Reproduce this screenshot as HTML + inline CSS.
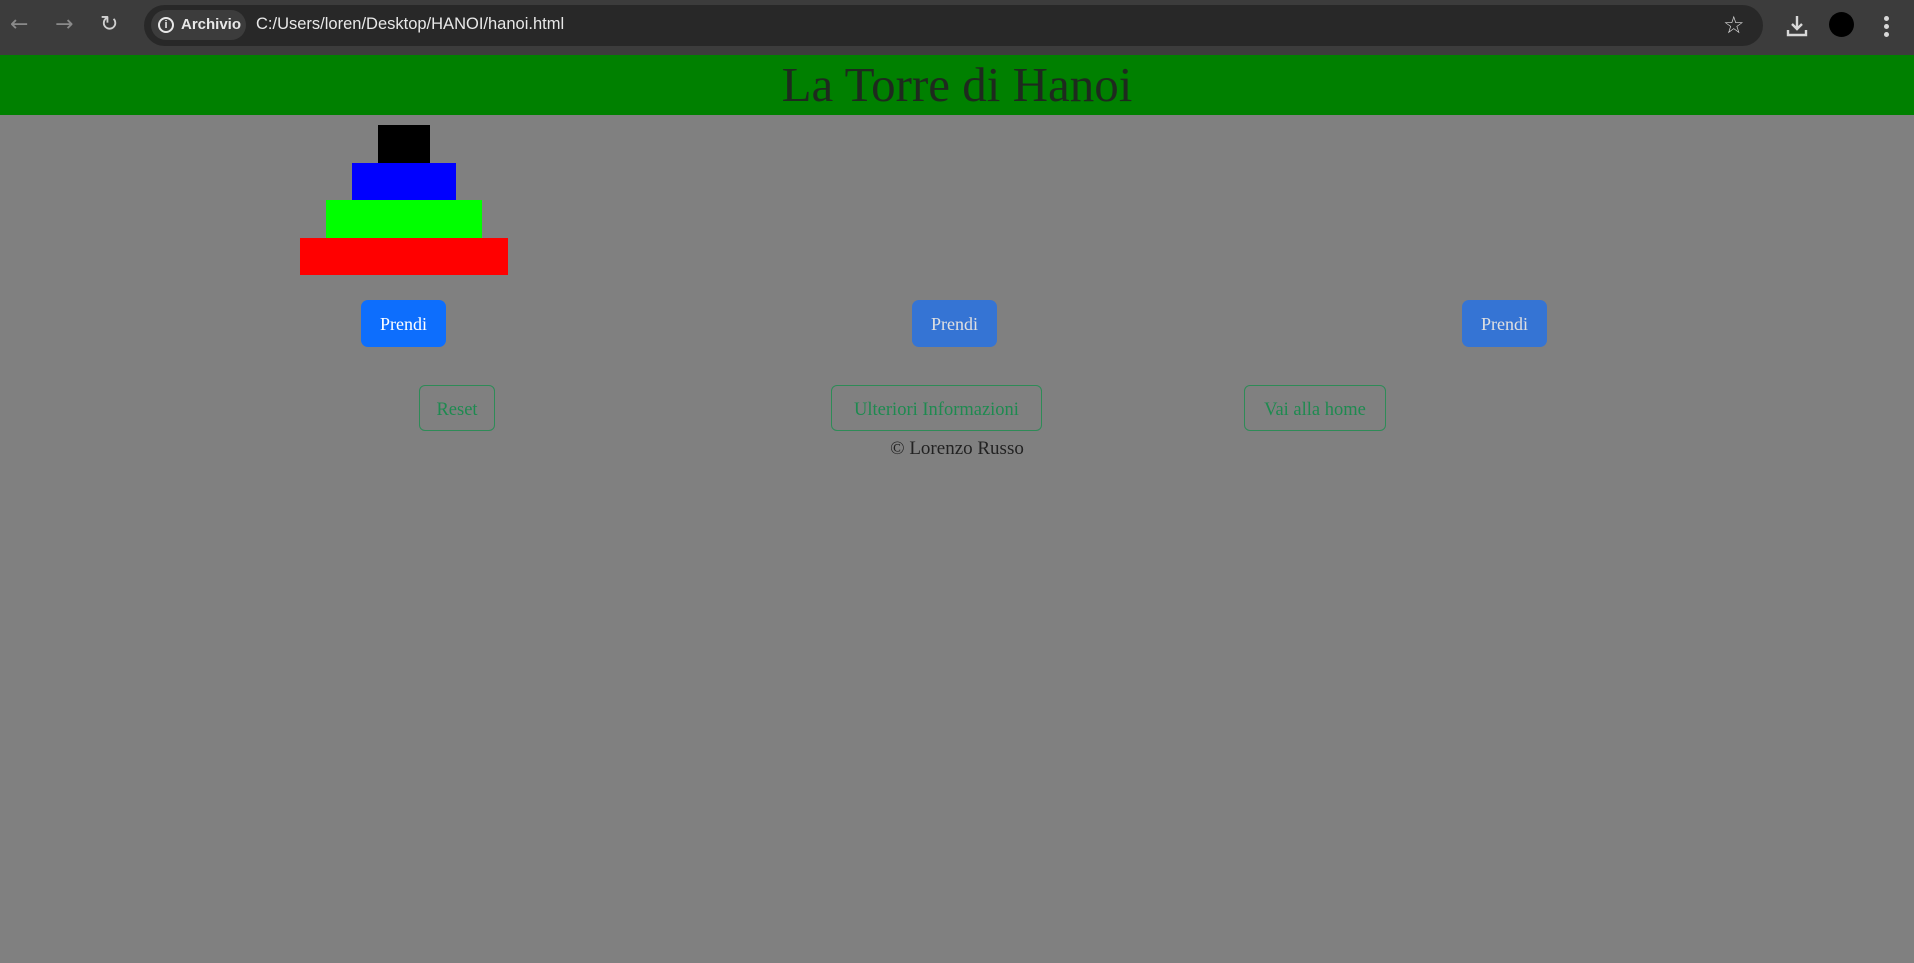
<!DOCTYPE html>
<html><head><meta charset="utf-8"><style>
*{margin:0;padding:0;box-sizing:border-box}
html,body{width:1914px;height:963px;overflow:hidden;background:#808080;font-family:"Liberation Serif",serif}
.chrome{position:absolute;left:0;top:0;width:1914px;height:55px;background:#3c3c3c}
.addr{position:absolute;left:144px;top:5px;width:1619px;height:41px;background:#282828;border-radius:21px}
.pill{position:absolute;left:151px;top:10px;width:95px;height:30px;background:#3c3c3c;border-radius:15px;color:#e8e8e8;font:bold 15px "Liberation Sans",sans-serif;line-height:30px;padding-left:30px}
.pill .i{position:absolute;left:7px;top:7px;width:16px;height:16px;border:2px solid #e8e8e8;border-radius:50%;font-size:11px;line-height:12px;text-align:center}
.url{position:absolute;left:256px;top:15px;color:#e8e8e8;font:16.5px "Liberation Sans",sans-serif}
.nav{position:absolute;top:12px;color:#8a8a8a;font:22px "DejaVu Sans",sans-serif}
.hdr{position:absolute;left:0;top:55px;width:1914px;height:60px;background:#008000;text-align:center;color:#1e2a1e;font-size:49px;line-height:60px}
.d{position:absolute}
.btn{position:absolute;top:300px;width:85px;height:47px;border-radius:7px;color:#fff;font-size:18px;line-height:49px;text-align:center}
.ob{position:absolute;top:385px;height:46px;border:1px solid #2e8b57;border-radius:6px;color:#1e8a50;font-size:18.5px;line-height:48px;text-align:center}
</style></head><body>
<div class="chrome">
<div class="nav" style="left:10px">←</div>
<div class="nav" style="left:55px">→</div>
<div class="nav" style="left:100px;color:#d0d0d0">↻</div>
<div class="addr"></div>
<div class="pill"><div class="i">i</div>Archivio</div>
<div class="url">C:/Users/loren/Desktop/HANOI/hanoi.html</div>
<div style="position:absolute;left:1723px;top:11px;color:#d8d8d8;font:24px 'DejaVu Sans'">☆</div>
<svg style="position:absolute;left:1784px;top:13px" width="26" height="26" viewBox="0 0 26 26"><path d="M13 3v13M8 11l5 5 5-5M4 17v5h18v-5" stroke="#d8d8d8" stroke-width="2.4" fill="none"/></svg>
<div style="position:absolute;left:1829px;top:12px;width:25px;height:25px;border-radius:50%;background:#000"></div>
<div style="position:absolute;left:1884px;top:16px;width:5px;height:5px;border-radius:50%;background:#d8d8d8;box-shadow:0 8px 0 #d8d8d8,0 16px 0 #d8d8d8"></div>
</div>
<div class="hdr">La Torre di Hanoi</div>
<div class="d" style="left:378px;top:125px;width:52px;height:38px;background:#000"></div>
<div class="d" style="left:352px;top:163px;width:104px;height:37px;background:#00f"></div>
<div class="d" style="left:326px;top:200px;width:156px;height:38px;background:#0f0"></div>
<div class="d" style="left:300px;top:238px;width:208px;height:37px;background:#f00"></div>
<div class="btn" style="left:361px;background:#0d6efd">Prendi</div>
<div class="btn" style="left:912px;background:#3574d4;color:#e0e0e0">Prendi</div>
<div class="btn" style="left:1462px;background:#3574d4;color:#e0e0e0">Prendi</div>
<div class="ob" style="left:419px;width:76px">Reset</div>
<div class="ob" style="left:831px;width:211px">Ulteriori Informazioni</div>
<div class="ob" style="left:1244px;width:142px">Vai alla home</div>
<div style="position:absolute;left:0;width:1914px;top:438px;text-align:center;color:#222;font-size:19px">© Lorenzo Russo</div>
</body></html>
